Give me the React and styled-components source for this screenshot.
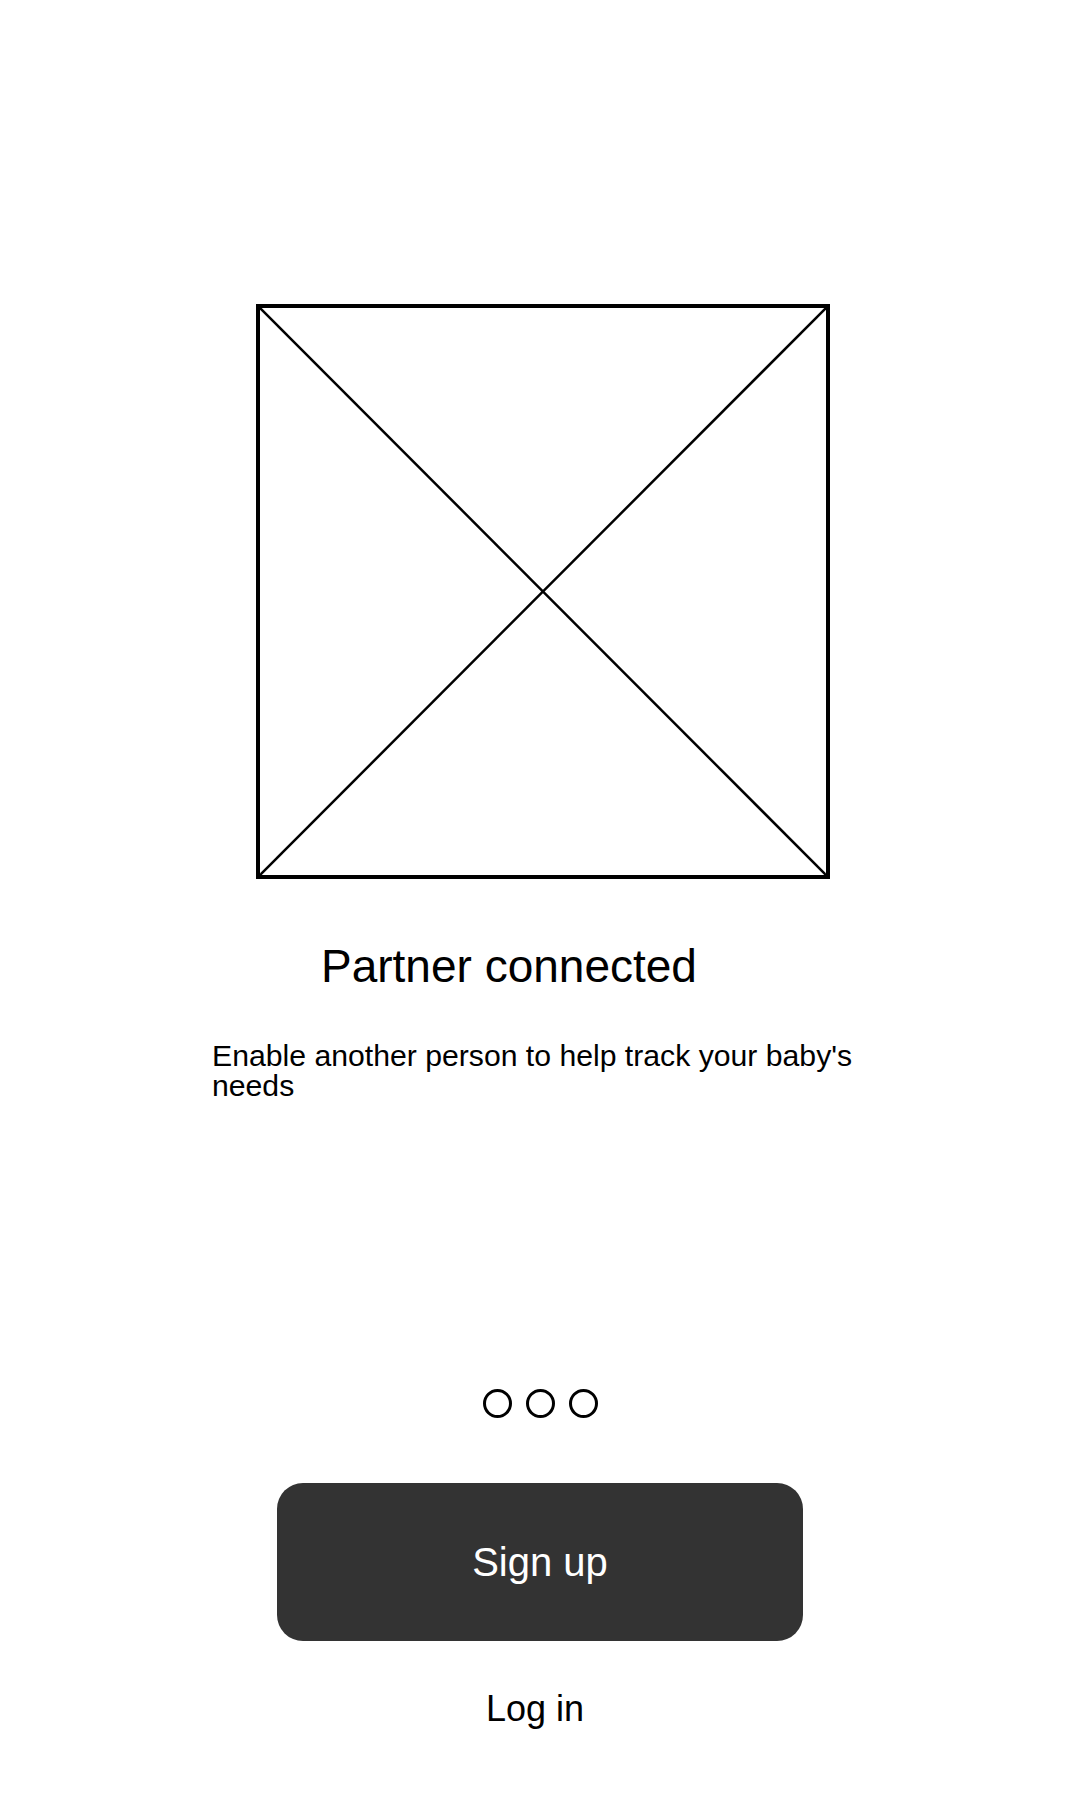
import React from "react";
import styled, { createGlobalStyle } from "styled-components";

const Global = createGlobalStyle`
*{
  box-sizing: border-box;
}
body{
  margin: 0;
  background: #ffffff;
  font-family: 'Liberation Sans', Arial, sans-serif;
  color: #000000;
}
`

const Screen = styled.div`
width: 1080px;
height: 1800px;
display: flex;
flex-direction: column;
align-items: center;
background: #ffffff;
`

const Placeholder = styled.div`
width: 574px;
height: 575px;
margin-top: 304px;
margin-left: 6px;
border: 4px solid #000000;
display: flex;
svg{
  width: 100%;
  height: 100%;
  display: block;
}
`

const TextBlock = styled.div`
width: 658px;
margin-left: 2px;
display: flex;
flex-direction: column;
`

const Title = styled.h1`
margin: 64px 0 0 109px;
font-size: 46px;
line-height: 46px;
font-weight: 400;
`

const Description = styled.p`
margin: 52px 0 0 0;
font-size: 30.2px;
line-height: 30px;
`

const Dots = styled.div`
display: flex;
gap: 14px;
margin-top: 288px;
`

const Dot = styled.span`
width: 29px;
height: 29px;
border-radius: 50%;
border: 3px solid #000000;
background: ${props => props.active ? '#000000' : 'transparent'};
`

const PrimaryButton = styled.button`
width: 526px;
height: 158px;
margin-top: 65px;
border: none;
border-radius: 26px;
background: #333333;
color: #ffffff;
font-family: 'Liberation Sans', Arial, sans-serif;
font-size: 40px;
line-height: 40px;
display: flex;
align-items: center;
justify-content: center;
`

const TextLink = styled.a`
margin-top: 50px;
margin-right: 10px;
font-size: 36px;
line-height: 36px;
color: #000000;
text-decoration: none;
`

function App() {
  const slides = [0, 1, 2];

  return (
    <Screen>
      <Global />
      <Placeholder>
        <svg viewBox="0 0 566 567" preserveAspectRatio="none">
          <line x1="0" y1="0" x2="566" y2="567" stroke="#000" strokeWidth="2.5" />
          <line x1="566" y1="0" x2="0" y2="567" stroke="#000" strokeWidth="2.5" />
        </svg>
      </Placeholder>
      <TextBlock>
        <Title>Partner connected</Title>
        <Description>Enable another person to help track your baby's needs</Description>
      </TextBlock>
      <Dots>
        {slides.map(i => <Dot key={i} />)}
      </Dots>
      <PrimaryButton>Sign up</PrimaryButton>
      <TextLink href="#">Log in</TextLink>
    </Screen>
  );
}

export default App;
